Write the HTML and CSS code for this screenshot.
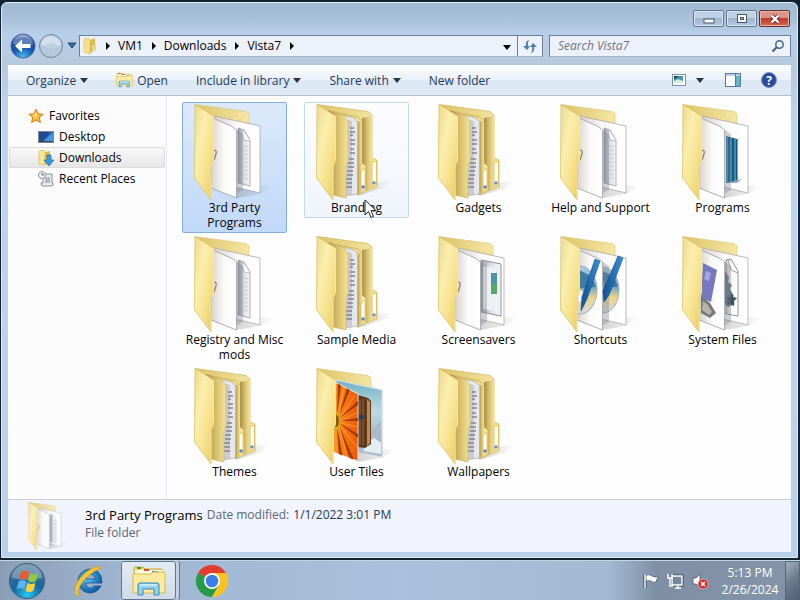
FILE: index.html
```html
<!DOCTYPE html>
<html lang="en">
<head>
<meta charset="utf-8">
<title>Vista7</title>
<link rel="stylesheet" href="styles.css">
</head>
<body>
<svg class="defs" aria-hidden="true">
  <defs>
    <linearGradient id="cover" x1="0" y1="0" x2="1" y2="1"><stop offset="0" stop-color="#ecd98c"/><stop offset=".35" stop-color="#fbefae"/><stop offset=".65" stop-color="#f6e18c"/><stop offset="1" stop-color="#eac957"/></linearGradient>
    <linearGradient id="inner" x1="0" y1="0" x2="1" y2="0"><stop offset="0" stop-color="#a08d50"/><stop offset=".5" stop-color="#d8bf6a"/><stop offset="1" stop-color="#f5e59a"/></linearGradient>
    <linearGradient id="back" x1="0" y1="0" x2="1" y2="0"><stop offset="0" stop-color="#dcc366"/><stop offset="1" stop-color="#f5e6a4"/></linearGradient>
    <linearGradient id="paper" x1="0" y1="0" x2="1" y2="0"><stop offset="0" stop-color="#d9d2c9"/><stop offset=".5" stop-color="#fafafa"/><stop offset="1" stop-color="#ffffff"/></linearGradient>
    <linearGradient id="shade" x1="0" y1="0" x2="1" y2="0"><stop offset="0" stop-color="#9a9aa5"/><stop offset=".5" stop-color="#dfe1e8"/><stop offset="1" stop-color="#f4f5f9"/></linearGradient>
    <linearGradient id="shadow" x1="0" y1="0" x2="1" y2="0"><stop offset="0" stop-color="#555" stop-opacity=".25"/><stop offset="1" stop-color="#555" stop-opacity="0"/></linearGradient>
    <linearGradient id="sky" x1="0" y1="0" x2="0" y2="1"><stop offset="0" stop-color="#6fb0c4"/><stop offset=".4" stop-color="#bcd9e2"/><stop offset="1" stop-color="#8da8b8"/></linearGradient>
    <linearGradient id="pen" x1="0" y1="0" x2="1" y2="0"><stop offset="0" stop-color="#0d4f92"/><stop offset="1" stop-color="#3a92d8"/></linearGradient>
    <linearGradient id="disc" x1="0" y1="0" x2="0" y2="1"><stop offset="0" stop-color="#a9cbe0"/><stop offset=".45" stop-color="#77a8c2"/><stop offset=".65" stop-color="#ecd284"/><stop offset="1" stop-color="#d3dce6"/></linearGradient>
    <linearGradient id="petal" x1="0" y1="0" x2="1" y2="0"><stop offset="0" stop-color="#f9a021"/><stop offset=".5" stop-color="#f4740f"/><stop offset="1" stop-color="#ec5a08"/></linearGradient>
    <radialGradient id="orb" cx=".5" cy=".9" r=".85"><stop offset="0" stop-color="#27c5f0"/><stop offset=".5" stop-color="#1565a4"/><stop offset="1" stop-color="#4c7693"/></radialGradient>
    <radialGradient id="nav" cx=".5" cy="1" r="1"><stop offset="0" stop-color="#52c3f4"/><stop offset=".45" stop-color="#1758b4"/><stop offset=".8" stop-color="#254c98"/><stop offset="1" stop-color="#97afd6"/></radialGradient>
    <radialGradient id="iegrad" cx=".4" cy=".4" r=".6"><stop offset="0" stop-color="#5cc7f5"/><stop offset="1" stop-color="#0b5da8"/></radialGradient>
    <clipPath id="frontclip"><path d="M27 14 50 26V93L25 84Z"/></clipPath>
    <clipPath id="backclip"><path d="M51 18 73 22V88L51 83Z"/></clipPath>
  </defs>
  <symbol id="base" viewBox="0 0 96 96">
    <path d="M50 80 88 82 74 90 50 94Z" fill="url(#shadow)"/>
    <path d="M9 .5 60 7.500 63 10V84H25Z" fill="url(#back)" stroke="#dfca7e" stroke-width=".7"/>
    <path d="M28 12 74 22V89L28 78Z" fill="url(#paper)" stroke="#a9a9ae" stroke-width=".8"/>
  </symbol>
  <symbol id="sheet" viewBox="0 0 96 96">
    <path d="M51 26V89L57 86V30Z" fill="#777d8c" opacity=".35"/>
    <path d="M27 14 46 22.500 50.500 26V94L25 84Z" fill="url(#paper)" stroke="#9c9ca3" stroke-width=".8"/>
  </symbol>
  <symbol id="cov" viewBox="0 0 96 96">
    <path d="M9 .5 27.500 12V56L25 62V96L8.500 74Z" fill="url(#cover)" stroke="#dcc36a" stroke-width=".8"/>
    <path d="M27.500 12V56L25 62V95" fill="none" stroke="#f8e69c" stroke-width="1"/>
  </symbol>
  <symbol id="doc" viewBox="0 0 96 96">
    <path d="M52 24 58 26 64 36V82L52 79Z" fill="url(#shade)" stroke="#9a9ea8" stroke-width=".8"/>
    <path d="M56 26 58 36 64 37" fill="#fff" stroke="#a5a9b2" stroke-width=".7"/>
    <path d="M55 41 62 43M55 45 62 47M55 49 62 51M55 53 62 55M55 57 62 59M55 61 62 63M55 65 62 67M55 69 62 71M55 73 62 75" stroke="#c6cad3" stroke-width="1"/>
  </symbol>
  <symbol id="curl" viewBox="0 0 96 96"><path d="M28 46q3 0 2 4l-2 6" fill="none" stroke="#8a7f68" stroke-width="1.200"/></symbol>
  <symbol id="f-doc" viewBox="0 0 96 96"><use href="#base"/><use href="#doc"/><use href="#sheet"/><use href="#curl"/><use href="#cov"/></symbol>
  <symbol id="f-tabs" viewBox="0 0 96 96">
    <path d="M50 82 84 76 76 84 50 92Z" fill="url(#shadow)"/>
    <path d="M9 .5 60 7.500 64 11V54L69 56V83L58 87 40 70Z" fill="url(#back)" stroke="#d2b652" stroke-width=".7"/>
    <path d="M54 14 64 12V54L63 85 54 87Z" fill="url(#inner)"/>
    <path d="M64 58 68.500 57V81L64 83Z" fill="#fff" stroke="#d9b840" stroke-width=".8"/><circle cx="66" cy="79" r="1.800" fill="#6a91cf"/>
    <path d="M20 7 50 13 54 18V59L58 62V87L49 91 40 80Z" fill="url(#back)" stroke="#c7aa48" stroke-width=".7"/>
    <path d="M50 17 54 18V59L53 89 49 90Z" fill="url(#inner)"/>
    <path d="M53 67 57 64V85L53 87Z" fill="#fff" stroke="#d9b840" stroke-width=".8"/><circle cx="55" cy="83" r="1.800" fill="#5785c6"/>
    <path d="M30 10 46 14 49.500 18V90L37 92Z" fill="#e6e7ec" stroke="#a8a8a8" stroke-width=".6"/>
    <path d="M40 16 44 17V91L38 91Z" fill="#8c8c98" opacity=".3"/>
    <path d="M42 24h4M42 28h5M42 31h3M42 36h5M42 40h5M42 45h4M42 49h5M41 55h5M40 59h6M40 63h6M39 67h6M39 71h6M38 75h6M38 79h6M38 83h6" stroke="#82868f" stroke-width="1.400"/>
    <path d="M20 6 35 11 40 17V57L38 63V94L25 91V20Z" fill="url(#inner)" stroke="#cbb25e" stroke-width=".7"/>
    <use href="#cov"/>
  </symbol>
  <symbol id="f-programs" viewBox="0 0 96 96"><use href="#base"/>
    <path d="M52 32 63 35V78L52 79Z" fill="#1f6f9d"/><path d="M55 33V78M59 34V78M63 35V77" stroke="#123f65" stroke-width="1"/><path d="M53 33V78M57 34V78M61 35V78" stroke="#3ba0c4" stroke-width="1.400"/><path d="M52 79 68 75 63 79Z" fill="#98aab8"/>
    <use href="#sheet"/><use href="#curl"/><use href="#cov"/></symbol>
  <symbol id="f-screens" viewBox="0 0 96 96"><use href="#base"/>
    <path d="M51 24 71 28V80L51 76Z" fill="url(#shade)" stroke="#8c929a" stroke-width="1"/><path d="M53 30 69 32V76L53 73Z" fill="#edf0f3"/><path d="M61 37 67 37V58L61 58Z" fill="#4c96a3"/><path d="M61 48H67V58H61Z" fill="#55a868"/>
    <use href="#sheet"/><use href="#curl"/><use href="#cov"/></symbol>
  <symbol id="f-shortcuts" viewBox="0 0 96 96"><use href="#base"/>
    <g clip-path="url(#backclip)"><ellipse cx="51" cy="54" rx="16" ry="23" fill="url(#disc)" stroke="#9eafbd"/><path d="M50 35 62 40 66 51 52 51Z" fill="#3e7ca3"/></g>
    <use href="#sheet"/>
    <g clip-path="url(#frontclip)"><ellipse cx="28" cy="54" rx="17" ry="24" fill="url(#disc)" stroke="#9eafbd"/><path d="M27 34 39 40 44 51 27 52Z" fill="#3e7ca3"/><ellipse cx="28" cy="60" rx="4" ry="6" fill="#eef2f6"/></g>
    <path d="M43 23 48 25 35 63 29 75 30 61Z" fill="url(#pen)" stroke="#164e86" stroke-width=".6"/>
    <path d="M66 20 71 22 57 59 52 66 51 55Z" fill="url(#pen)" stroke="#164e86" stroke-width=".6"/>
    <use href="#cov"/></symbol>
  <symbol id="f-system" viewBox="0 0 96 96"><use href="#base"/>
    <path d="M52 24 57 23 64 35V80L52 78Z" fill="url(#paper)" stroke="#81868e" stroke-width=".9"/><path d="M54 23 57 34 64 37" fill="#fff" stroke="#888" stroke-width=".8"/>
    <path d="M51 35 55 41 54 46 58 49 56 53 60 60 56 64 61 68 54 71 51 68Z" fill="#647b86"/><path d="m57 57 2 4 4 1-3 3v5l-4-2-4 1 2-5-2-3h4Z" fill="#39535c"/>
    <use href="#sheet"/><path d="M29 27 43 34 37 66 27 62Z" fill="#7579bd"/><path d="M32 35 37 37 35 45 30 43Z" fill="#a4a7db"/><path d="M27 60 36 67 42 77 36 82 27 77Z" fill="#777976"/><path d="M29 65 34 69 38 76 35 79 28 74Z" fill="#b5b4a7"/>
    <use href="#cov"/></symbol>
  <symbol id="f-user" viewBox="0 0 96 96"><use href="#base"/>
    <path d="M28 12 74 22V89L28 78Z" fill="url(#sky)" stroke="#dde6ea" stroke-width="1"/><path d="M50 65 58 55 64 61 73 54V88L50 84Z" fill="#a7bcc8"/><path d="M58 76 66 70 73 75V86L55 83Z" fill="#e3edf3"/>
    <path d="M50 27 60 30 63 33V76L57 80 50 79Z" fill="#5d391e"/><path d="M59 31 62 34V75L59 78Z" fill="#c08b48"/><path d="M52 32V76M55 31V77" stroke="#98643a" stroke-width="1"/><circle cx="53" cy="49" r="2.500" fill="#283c68"/>
    <path d="M27 14 50 26V93L25 84Z" fill="url(#petal)" stroke="#e8e8e8"/>
    <g clip-path="url(#frontclip)" fill="#a83a06"><path d="M29 48 30 14 33 18Z"/><path d="M30 50 39 20 42 22Z"/><path d="M30 51 50 33V37Z"/><path d="M31 53 50 50V53Z"/><path d="M31 55 50 66V70Z"/><path d="M31 57 46 92H42Z"/><path d="M29 58 35 90H31Z"/></g>
    <g clip-path="url(#frontclip)" stroke="#ffa040" stroke-width=".8"><path d="M31 48 36 19M32 50 47 27M33 53 50 44M33 55 50 59M32 57 50 81M31 58 39 89"/></g>
    <ellipse cx="28" cy="53" rx="5" ry="10" fill="#d9a01c"/><ellipse cx="28" cy="53" rx="3" ry="6" fill="#8a5c0c"/>
    <use href="#cov"/></symbol>
  <symbol id="explorer" viewBox="0 0 34 32">
    <path d="M2 6V3q0-1 1-1h8l2 2h16q2 0 2 2v20H2Z" fill="#f0d774" stroke="#c9a93c"/>
    <path d="M5 2h4v2H5Z" fill="#3fa03b"/><path d="M3 5h28v4H3Z" fill="#fffbe3"/><path d="M12 4h5v2h-5Z" fill="#d34f32"/><path d="M20 6h6v2h-6Z" fill="#3c88cc"/>
    <path d="M1 9h18l2-2h10q2 0 2 2v19H1Z" fill="#fbea9f" stroke="#d7b951"/>
    <path d="M6 30V20q0-2 2-2h17q2 0 2 2v10h-5v-6H11v6Z" fill="#8fd0ee" stroke="#3687b6"/><path d="M8 20h17" stroke="#d9f4ff" stroke-width="1.500"/>
  </symbol>
</svg>

<main class="window">
  <header class="glass">
    <div class="caption">
      <button class="cap" aria-label="Minimize"><svg width="14" height="12" viewBox="0 0 14 12"><rect x="2" y="6" width="10" height="4" fill="#fff" stroke="#47566c"/></svg></button>
      <button class="cap" aria-label="Maximize"><svg width="14" height="12" viewBox="0 0 14 12"><rect x="2.500" y="1.500" width="9" height="8" fill="#fff" stroke="#47566c"/><rect x="5.500" y="4.500" width="3" height="2" fill="#a9bfd6" stroke="#47566c"/></svg></button>
      <button class="cap close" aria-label="Close"><svg width="14" height="12" viewBox="0 0 14 12"><path d="M3.500 2.500 10.500 9.500M10.500 2.500 3.500 9.500" stroke="#6b2f33" stroke-width="4"/><path d="M3.500 2.500 10.500 9.500M10.500 2.500 3.500 9.500" stroke="#fff" stroke-width="2.400"/></svg></button>
    </div>
    <div class="navrow">
      <div class="history">
        <button class="round" aria-label="Back"><svg width="26" height="26" viewBox="0 0 26 26"><circle cx="13" cy="13" r="12" fill="url(#nav)" stroke="#44608f"/><path d="M3 11a10 9 0 0 1 20 0q-10 3-20 0Z" fill="#fff" opacity=".28"/><path d="M5 13 12 6.500V11h8.500v4H12v4.500Z" fill="#fff"/></svg></button>
        <button class="round" aria-label="Forward"><svg width="26" height="26" viewBox="0 0 26 26"><circle cx="13" cy="13" r="11.500" fill="#b6c9dc" stroke="#6e87a3"/><path d="M3 12a10 9 0 0 1 20 0q-10 3-20 0Z" fill="#dde7f0" opacity=".75"/><path d="M20 13 14 8v3H8v4h6v3Z" fill="#c0d0e0"/></svg></button>
        <button class="recent" aria-label="Recent pages"><svg width="10" height="7" viewBox="0 0 10 7"><path d="M1 1h8L5 6Z" fill="#2f6e9d" stroke="#24476b"/></svg></button>
      </div>
      <nav class="address" aria-label="Address">
        <svg class="folder-s" width="16" height="18" viewBox="0 0 16 18"><path d="M2 2 7 1 8 3V17L2 15Z" fill="#f4e08c" stroke="#d9bf62" stroke-width=".6"/><path d="M8 3 13 1V12L8 17Z" fill="#d9bd50"/><path d="M10 9 14 7V13L10 15Z" fill="#e8d68b"/></svg>
        <span class="tri"></span><a href="#">VM1</a><span class="tri"></span><a href="#">Downloads</a><span class="tri"></span><a href="#">Vista7</a><span class="tri"></span>
        <button class="drop" aria-label="Previous locations"><span class="down"></span></button>
        <button class="refresh" aria-label="Refresh"><svg width="16" height="16" viewBox="0 0 16 16"><path d="M7 2Q3 3 4 8H1l4 4 3-4H6Q5 5 7 2Z" fill="#4e7db4"/><path d="M9 15q4-1 3-6h3l-4-4-3 4h2q1 3-1 6Z" fill="#4e7db4"/></svg></button>
      </nav>
      <div class="search">
        <input type="search" aria-label="Search Vista7" placeholder="Search Vista7">
        <svg width="14" height="14" viewBox="0 0 14 14"><circle cx="8.500" cy="5.500" r="3.700" fill="#eef5fc" stroke="#43658f" stroke-width="1.500"/><path d="M6 8 1.500 12.500" stroke="#43658f" stroke-width="2.200"/></svg>
      </div>
    </div>
  </header>

  <section class="client">
    <div class="toolbar">
      <button>Organize<span class="down"></span></button>
      <button class="open"><svg width="17" height="16" viewBox="0 0 34 32"><use href="#explorer"/></svg>Open</button>
      <button>Include in library<span class="down"></span></button>
      <button>Share with<span class="down"></span></button>
      <button>New folder</button>
      <button class="view" aria-label="Change view"><svg width="14" height="12" viewBox="0 0 14 12"><rect x=".5" y=".5" width="13" height="11" fill="#fff" stroke="#7d92ad"/><path d="M2 2h9v7H2Z" fill="#4794a2"/><path d="M2 7 6 5 11 7V9H2Z" fill="#d4eddc"/><path d="M2 2h5L2 5Z" fill="#123f50"/></svg></button>
      <button class="more" aria-label="More views"><span class="down"></span></button>
      <button class="pane" aria-label="Preview pane"><svg width="16" height="14" viewBox="0 0 16 14"><rect x=".5" y=".5" width="15" height="13" fill="#fff" stroke="#55799c"/><path d="M1 1h14v2H1Z" fill="#b9d3e6"/><path d="M10 3h5v10h-5Z" fill="#62b4c7"/><path d="M10.500 1V13" stroke="#55799c"/></svg></button>
      <button class="help" aria-label="Help">?</button>
    </div>

    <div class="body">
      <nav class="sidebar" aria-label="Favorites">
        <a class="head" href="#"><svg width="16" height="16" viewBox="0 0 16 16"><path d="m8 1 2.100 4.700 5 .5-3.800 3.400 1.100 5L8 12l-4.400 2.600 1.100-5L1 6.200l5-.5Z" fill="#fdb938" stroke="#db7f1e"/><path d="m8 4 1 3-1 3-3-3Z" fill="#ffe38a"/></svg>Favorites</a>
        <a href="#"><svg width="16" height="16" viewBox="0 0 16 16"><rect x=".5" y="2.500" width="15" height="11" fill="#2f68b5" stroke="#7b8794"/><path d="M1 3h11L6 13H1Z" fill="#1c4c93"/><path d="M5 12 15 4V13Z" fill="#4a96dc"/><path d="M1 12.500h14" stroke="#354450"/></svg>Desktop</a>
        <a class="current" href="#"><svg width="16" height="16" viewBox="0 0 16 16"><path d="M1 1 6 0 7 2V15L1 14Z" fill="#f7e48f" stroke="#d8bc59" stroke-width=".7"/><path d="M7 2 12 1V13L7 15Z" fill="#d8bd56"/><path d="M9 5h4v5h3l-5 6-5-6h3Z" fill="#3a9ad9" stroke="#1c6ba5" stroke-width=".7"/></svg>Downloads</a>
        <a href="#"><svg width="16" height="16" viewBox="0 0 16 16"><path d="M5 3h9v9h1q1 3-2 3H5q-2 0-2-3h2Z" fill="#eceef0" stroke="#868e98"/><path d="M7 7h5M7 9h5M7 11h5" stroke="#7b848f"/><circle cx="4" cy="4" r="3.500" fill="#f2f5f7" stroke="#8b97a3"/><path d="M4 2v2h2" fill="none" stroke="#53606d"/></svg>Recent Places</a>
      </nav>

      <ul class="files">
        <li><a class="item selected" href="#"><svg><use href="#f-doc"/></svg><span>3rd Party Programs</span></a></li>
        <li><a class="item hover" href="#"><svg><use href="#f-tabs"/></svg><span>Branding</span></a>
          <svg class="pointer" viewBox="0 0 13 20" aria-hidden="true"><path d="M1 1V16L4.500 12.500 7 18.500 9.500 17.500 7 11.500H12Z" fill="#fff" stroke="#222"/></svg></li>
        <li><a class="item" href="#"><svg><use href="#f-tabs"/></svg><span>Gadgets</span></a></li>
        <li><a class="item" href="#"><svg><use href="#f-doc"/></svg><span>Help and Support</span></a></li>
        <li><a class="item" href="#"><svg><use href="#f-programs"/></svg><span>Programs</span></a></li>
        <li><a class="item" href="#"><svg><use href="#f-doc"/></svg><span>Registry and Misc mods</span></a></li>
        <li><a class="item" href="#"><svg><use href="#f-tabs"/></svg><span>Sample Media</span></a></li>
        <li><a class="item" href="#"><svg><use href="#f-screens"/></svg><span>Screensavers</span></a></li>
        <li><a class="item" href="#"><svg><use href="#f-shortcuts"/></svg><span>Shortcuts</span></a></li>
        <li><a class="item" href="#"><svg><use href="#f-system"/></svg><span>System Files</span></a></li>
        <li><a class="item" href="#"><svg><use href="#f-tabs"/></svg><span>Themes</span></a></li>
        <li><a class="item" href="#"><svg><use href="#f-user"/></svg><span>User Tiles</span></a></li>
        <li><a class="item" href="#"><svg><use href="#f-tabs"/></svg><span>Wallpapers</span></a></li>
      </ul>
    </div>

    <footer class="details">
      <svg width="48" height="48"><use href="#f-doc"/></svg>
      <div>
        <p><span class="name">3rd Party Programs</span><span class="label">Date modified:</span><span>1/1/2022 3:01 PM</span></p>
        <p class="label">File folder</p>
      </div>
    </footer>
  </section>
</main>

<footer class="taskbar">
  <button class="start" aria-label="Start"><svg width="38" height="38" viewBox="0 0 38 38"><circle cx="19" cy="19" r="17.500" fill="url(#orb)" stroke="#3d5f7c"/><path d="M4 16a15 14 0 0 1 30 0q-15 4-30 0Z" fill="#fff" opacity=".3"/><path d="M13 10q4-3 8 0l-2 8q-4-3-8 0Z" fill="#ee5a2c"/><path d="M22 11q4 3 8 0l-2 8q-4 3-8 0Z" fill="#8ecb3d"/><path d="M10.500 19.500q4-3 8 0l-2 8q-4-3-8 0Z" fill="#5ab4ee"/><path d="M19.500 20.500q4 3 8 0l-2 8q-4 3-8 0Z" fill="#fdd23c"/></svg></button>
  <button class="app" aria-label="Internet Explorer"><svg width="32" height="32" viewBox="0 0 32 32"><path fill-rule="evenodd" d="M17 4a12 12 0 1 0 11 17h-7q-2 3-5 2-3-1-3-5h16Q29 5 17 4Zm-4 10q0-5 4-5t5 5Z" fill="url(#iegrad)" stroke="#1c558c" stroke-width=".8"/><path d="M29 3Q24-1 12 8 1 18 2 28q1 4 6 1-5 1-2-6 4-9 13-15 7-5 10-5Z" fill="#f8c62d" stroke="#d79b18" stroke-width=".6"/></svg></button>
  <button class="app active" aria-label="Windows Explorer"><svg width="34" height="32"><use href="#explorer"/></svg></button>
  <button class="app" aria-label="Google Chrome"><svg width="34" height="34" viewBox="0 0 34 34"><path d="M17 17 3.100 9A16 16 0 0 1 30.900 9H17Z" fill="#e33b2e"/><path d="M17 17 3.100 9A16 16 0 0 0 17 33L24 21Z" fill="#269a48"/><path d="M17 9H30.900A16 16 0 0 1 17 33L24 21Z" fill="#fcc31e"/><circle cx="17" cy="17" r="8" fill="#fff"/><circle cx="17" cy="17" r="6.300" fill="#3b7de9"/></svg></button>
  <div class="tray">
    <button aria-label="Action Center"><svg width="16" height="18" viewBox="0 0 16 18"><path d="M2 2V16" stroke="#2c3a4c" stroke-width="3"/><path d="M3 3q4-1 6 1 3 2 6 0l-2 6q-3 1-5-1-2-1-5 0Z" fill="#fff" stroke="#47566a" stroke-width=".7"/><path d="M2 2V16" stroke="#fff" stroke-width="1.500"/></svg></button>
    <button aria-label="Network"><svg width="18" height="18" viewBox="0 0 18 18"><path d="M6 4H16V13H6Z" fill="#6e8298" stroke="#2f3e50" stroke-width="3"/><path d="M6 4H16V13H6Z" fill="#75899e" stroke="#fff" stroke-width="1.400"/><path d="M9 16H15M12 13v3" stroke="#fff" stroke-width="1.500"/><path d="M2 2V6H6V2M4 6V14H7" fill="none" stroke="#fff" stroke-width="1.400"/></svg></button>
    <button aria-label="Volume muted"><svg width="18" height="18" viewBox="0 0 18 18"><path d="M2 6H5L9 2V15L5 12H2Z" fill="#fff" stroke="#47566a" stroke-width=".8"/><circle cx="12" cy="12" r="5" fill="#d92b2b" stroke="#f3c6c6" stroke-width=".6"/><path d="m10 10 4 4m0-4-4 4" stroke="#fff" stroke-width="1.500"/></svg></button>
  </div>
  <time class="clock" datetime="2024-02-26T17:13"><span>5:13 PM</span><span>2/26/2024</span></time>
  <button class="peek" aria-label="Show desktop"></button>
</footer>
</body>
</html>
```
FILE: styles.css
```css
* { box-sizing: border-box; }

body {
  margin: 0;
  min-height: 100vh;
  display: flex;
  flex-direction: column;
  background: #14222f;
  color: #000;
  font: 12px/15px "Open Sans", "Noto Sans", sans-serif;
}

button {
  margin: 0;
  padding: 0;
  border: 0;
  background: none;
  color: inherit;
  font: inherit;
}

a { color: inherit; text-decoration: none; }
svg { display: block; flex: none; }
p { margin: 0; }
.defs { position: absolute; width: 0; height: 0; }

.window {
  flex: 1;
  display: flex;
  flex-direction: column;
  margin: 2px 2px 2px 1px;
  padding: 0 6px 5px;
  border: 1px solid #dcecf8;
  border-radius: 6px 6px 0 0;
  background: linear-gradient(#a3b9d0 0, #a2bdd5 10px, #b8cfe9 32px, #b7c9de 60px, #bcd5f0 120px, #b9d0eb 100%);
}

.glass { display: flex; flex-direction: column; }

.caption {
  display: flex;
  justify-content: flex-end;
  padding: 7px 1px 0 0;
  height: 24px;
}

.cap {
  display: flex;
  align-items: center;
  justify-content: center;
  width: 31px;
  height: 17px;
  margin-left: 2px;
  border: 1px solid #65788f;
  border-radius: 2px;
  box-shadow: inset 0 0 0 1px #d6e3f1;
  background: linear-gradient(#bfd1e4 50%, #9fb5cd 50%, #b4cae2);
}

.close {
  border-color: #6b2d34;
  box-shadow: inset 0 0 0 1px #eab1a5;
  background: linear-gradient(#dd9486 50%, #c13b2b 50%, #d0694f);
}

.navrow {
  display: flex;
  align-items: center;
  height: 38px;
  padding-bottom: 1px;
}

.history { display: flex; align-items: center; gap: 2px; padding: 0 1px 0 2px; }
.recent { width: 12px; display: flex; justify-content: center; }

.address, .search {
  display: flex;
  align-items: center;
  height: 22px;
  border: 1px solid #6d7f97;
  border-bottom-color: #a3b5cb;
  background: #edf1fa;
}

.address { flex: 1; min-width: 0; }
.folder-s { margin: 0 7px 0 2px; }

.tri {
  margin: 0 8px 0 1px;
  border: 4px solid transparent;
  border-left-color: #000;
  border-right-width: 0;
}

.address a { margin-right: 8px; }

.down {
  display: inline-block;
  border: 4px solid transparent;
  border-top: 5px solid #2a3446;
  border-bottom: 0;
}

.drop { margin-left: auto; width: 20px; height: 20px; }
.drop .down { border-top-color: #000; }

.refresh {
  display: flex;
  align-items: center;
  justify-content: center;
  width: 25px;
  height: 20px;
  border-left: 1px solid #6d7f97;
}

.search { width: 31%; max-width: 242px; margin-left: 6px; padding-right: 5px; }

.search input {
  flex: 1;
  min-width: 0;
  padding: 0 8px;
  border: 0;
  background: none;
  font: inherit;
  outline: 0;
}

.search input::placeholder { color: #6c7480; font-style: italic; opacity: 1; }

.client { flex: 1; display: flex; flex-direction: column; background: #fdfdfe; }

.toolbar {
  display: flex;
  align-items: center;
  height: 31px;
  padding: 0 14px 0 18px;
  border-bottom: 1px solid #b5c1d0;
  background: linear-gradient(#fbfdff, #eaf1fa 50%, #dce7f4 51%, #dfe9f5);
  color: #1e395b;
}

.toolbar button { display: flex; align-items: center; gap: 4px; margin-right: 28px; }
.toolbar .view { margin: 0 10px 0 auto; }
.toolbar .more { margin-right: 21px; }
.toolbar .pane { margin-right: 20px; }

.toolbar .help {
  justify-content: center;
  width: 16px;
  height: 16px;
  margin: 0;
  border: 1px solid #8190b5;
  border-radius: 50%;
  background: #2c4a9c;
  color: #fff;
  font-weight: bold;
}

.body { flex: 1; display: flex; }

.sidebar {
  flex: none;
  width: 159px;
  padding: 9px 1px;
  border-right: 1px solid #e6ebf2;
  background: #fcfcfd;
}

.sidebar a {
  display: flex;
  align-items: center;
  gap: 5px;
  height: 21px;
  padding-left: 28px;
  border: 1px solid transparent;
  border-radius: 2px;
}

.sidebar .head { padding-left: 18px; }
.sidebar .current { border-color: #dcdcdc; background: linear-gradient(#f9f9f9, #e6e6e6); }

.files {
  flex: 1;
  display: grid;
  grid-template-columns: repeat(auto-fill, 105px);
  grid-auto-rows: 132px;
  align-content: start;
  column-gap: 17px;
  margin: 0;
  padding: 6px 3px 0 15px;
  list-style: none;
}

.files li { position: relative; }

.item {
  display: flex;
  flex-direction: column;
  align-items: center;
  padding: 1px 1px 2px;
  border: 1px solid transparent;
  border-radius: 2px;
  text-align: center;
}

.item svg { width: 96px; height: 96px; margin-right: 1px; }
.selected { border-color: #84acdd; background: linear-gradient(#dce9fa, #c0d9f8); }
.hover { border-color: #c2d8ee; background: linear-gradient(#fcfdff, #f0f5fc); }
.pointer { position: absolute; left: 60px; top: 97px; width: 13px; height: 20px; }

.details {
  display: flex;
  height: 53px;
  padding-left: 16px;
  gap: 13px;
  border-top: 1px solid #c9d0da;
  background: #f1f4fc;
  color: #1e395b;
}

.details svg { margin-top: 2px; opacity: .8; }
.details div { padding-top: 6px; }
.details p { display: flex; gap: 4px; line-height: 18px; }
.details .name { color: #000; font-size: 13px; }
.details .label { color: #5a6779; }

.taskbar {
  display: flex;
  align-items: center;
  height: 40px;
  padding-left: 8px;
  border-top: 1px solid #c1d5e8;
  background: linear-gradient(90deg, #8a9db5 0, #9fb5cf 120px, #a9c1dc 50%, #a3bad3 76%, #7f90a6 82%, #8494a8 100%);
}

.app {
  display: flex;
  align-items: center;
  justify-content: center;
  width: 56px;
  height: 39px;
  margin-right: 8px;
}

.start { margin-right: 15px; }

.active {
  width: 55px;
  margin: 0 8px 0 -4px;
  border: 1px solid #f4f8fc;
  outline: 1px solid #63758c;
  outline-offset: -1px;
  border-radius: 3px;
  background: linear-gradient(#e3ebf3, #cfdae6);
  box-shadow: 3px 0 0 #c3d2e2, 4px 0 0 #63758c;
}

.tray { display: flex; align-items: center; gap: 7px; margin-left: auto; padding-right: 6px; }

.clock {
  display: flex;
  flex-direction: column;
  align-items: center;
  width: 70px;
  color: #fff;
  line-height: 17px;
}

.peek {
  width: 15px;
  height: 39px;
  border: 1px solid #566679;
  background: linear-gradient(135deg, #a3b0c0, #6b7b8e 50%, #4f6075);
}
```
